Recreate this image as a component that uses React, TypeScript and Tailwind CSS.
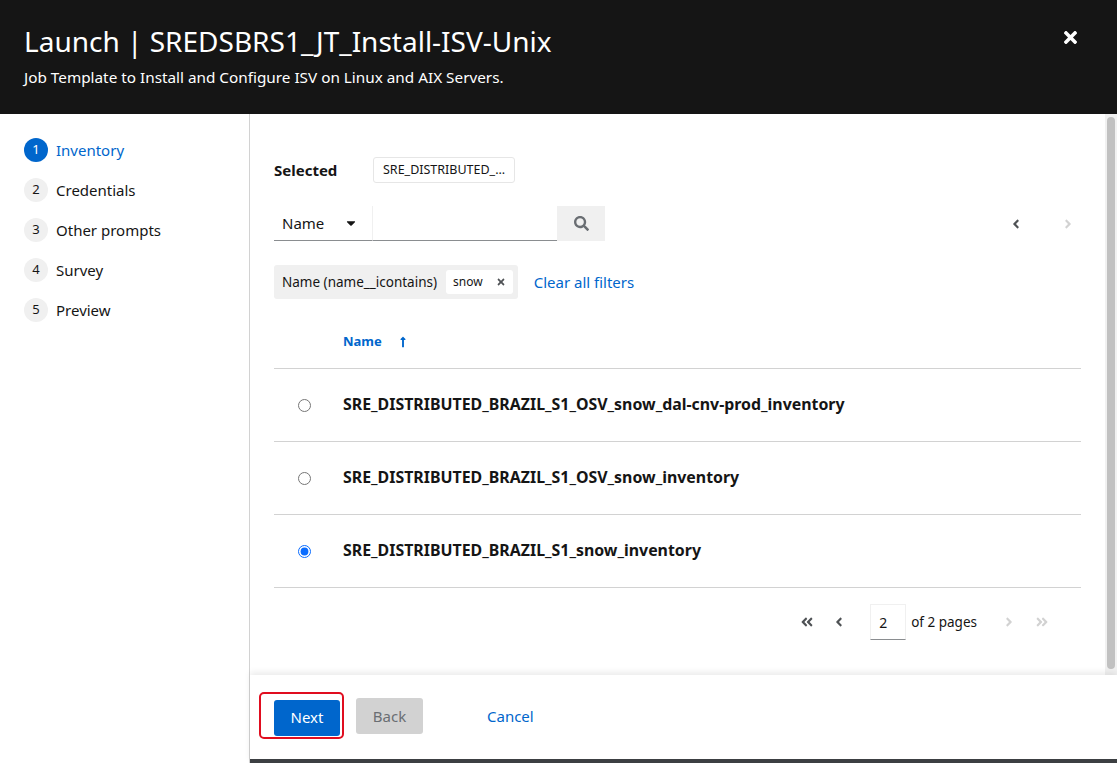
import React from "react";
import {
  FaSearch,
  FaAngleLeft,
  FaAngleRight,
  FaAngleDoubleLeft,
  FaAngleDoubleRight,
  FaTimes,
  FaCaretDown,
  FaLongArrowAltUp,
} from "react-icons/fa";

const steps = ["Inventory", "Credentials", "Other prompts", "Survey", "Preview"];

const rows = [
  { name: "SRE_DISTRIBUTED_BRAZIL_S1_OSV_snow_dal-cnv-prod_inventory", checked: false },
  { name: "SRE_DISTRIBUTED_BRAZIL_S1_OSV_snow_inventory", checked: false },
  { name: "SRE_DISTRIBUTED_BRAZIL_S1_snow_inventory", checked: true },
];

const App = () => {
  return (
    <div
      className="flex flex-col h-screen bg-white text-[#151515]"
      style={{ fontFamily: '"Noto Sans", "Open Sans", sans-serif' }}
    >
      <div className="h-[114px] bg-[#151515] text-white flex justify-between pl-6 pt-[22px]">
        <div>
          <div className="text-[28px] leading-[38px]">Launch | SREDSBRS1_JT_Install-ISV-Unix</div>
          <div className="text-[15.3px] mt-[6px]">Job Template to Install and Configure ISV on Linux and AIX Servers.</div>
        </div>
        <div className="pt-[6px] pr-[37px]">
          <FaTimes className="text-[19px]" />
        </div>
      </div>

      <div className="flex flex-1 min-h-0">
        <div className="w-[250px] border-r border-[#d2d2d2] pt-6 pl-6 flex flex-col gap-4">
          {steps.map((s, i) => (
            <div key={s} className="flex items-center h-6 gap-2">
              <div
                className={
                  i === 0
                    ? "w-6 h-6 rounded-full bg-[#0066cc] text-white text-[13px] flex items-center justify-center"
                    : "w-6 h-6 rounded-full bg-[#f0f0f0] text-[#151515] text-[13px] flex items-center justify-center"
                }
              >
                {i + 1}
              </div>
              <div className={i === 0 ? "text-[15px] text-[#0066cc]" : "text-[15px]"}>{s}</div>
            </div>
          ))}
        </div>

        <div className="flex-1 flex flex-col min-w-0">
          <div className="flex-1 flex min-h-0">
            <div className="flex-1 pl-6 pr-6 pt-[44px]">
              <div className="flex items-center h-[26px] -mt-[1px]">
                <div className="w-[99px] font-bold text-[15px]">Selected</div>
                <div className="border border-[#e6e6e6] rounded-[3px] px-[9px] h-[26px] flex items-center text-[12.5px]">
                  SRE_DISTRIBUTED_...
                </div>
              </div>

              <div className="flex items-center justify-between mt-[23px]">
                <div className="flex h-[35px]">
                  <div className="w-[98px] border-b border-[#8a8d90] flex items-center justify-between px-2 text-[15px]">
                    <span>Name</span>
                    <FaCaretDown className="text-[14px] mr-[6px]" />
                  </div>
                  <div className="w-[185px] border-l border-[#f0f0f0] border-b border-b-[#8a8d90]"></div>
                  <div className="w-[48px] bg-[#f0f0f0] flex items-center justify-center text-[#6a6e73]">
                    <FaSearch className="text-[15px]" />
                  </div>
                </div>
                <div className="flex items-center gap-[38px] pr-[6px] text-[14px]">
                  <FaAngleLeft className="text-[#4f5255]" />
                  <FaAngleRight className="text-[#d2d2d2]" />
                </div>
              </div>

              <div className="flex items-center mt-[24px]">
                <div className="bg-[#f0f0f0] rounded-[3px] h-[34px] flex items-center pl-2 pr-[5px] gap-[9px]">
                  <span className="text-[13.5px]">Name (name__icontains)</span>
                  <div className="bg-white rounded-[3px] h-6 px-[7px] flex items-center gap-[13px] text-[12px]">
                    <span>snow</span>
                    <FaTimes className="text-[10px] text-[#4f5255]" />
                  </div>
                </div>
                <div className="ml-[16px] text-[#0066cc] text-[15px]">Clear all filters</div>
              </div>

              <div className="mt-[23px] h-[47px] flex items-center border-b border-[#d2d2d2] pl-[69px] pb-[6px]">
                <span className="text-[#0066cc] text-[13px] font-bold">Name</span>
                <FaLongArrowAltUp className="text-[#0066cc] text-[12px] ml-[15px]" />
              </div>

              {rows.map((r) => (
                <div key={r.name} className="h-[73px] flex items-center border-b border-[#d2d2d2]">
                  <div className="w-[69px] flex">
                    <input
                      type="radio"
                      readOnly
                      checked={r.checked}
                      className="w-[13px] h-[13px] ml-[24px] accent-[#0a6cff]"
                    />
                  </div>
                  <span className="font-bold text-[15.9px]">{r.name}</span>
                </div>
              ))}

              <div className="flex items-center justify-end mt-[16px] pr-[32px] text-[14px]">
                <FaAngleDoubleLeft className="text-[#4f5255]" />
                <FaAngleLeft className="text-[#4f5255] ml-[18px]" />
                <div className="ml-[24px] w-[36px] h-[36px] border border-[#f0f0f0] border-b-[#8a8d90] flex items-center pl-2 text-[14px]">
                  2
                </div>
                <span className="ml-[5px] text-[13.5px]">of 2 pages</span>
                <FaAngleRight className="text-[#d2d2d2] ml-[25px]" />
                <FaAngleDoubleRight className="text-[#d2d2d2] ml-[19px]" />
              </div>
            </div>
            <div className="w-[12px] bg-[#f1f1f1] flex justify-center pt-[3px] pb-[6px]">
              <div className="w-[8px] h-full bg-[#c1c1c1] rounded-full"></div>
            </div>
          </div>

          <div className="h-[88px] border-b-4 border-[#3c3f42] shadow-[0_-3px_6px_rgba(0,0,0,0.08)] flex items-center pl-[9px] pb-[2px]">
            <div className="border-2 border-[#e00d1f] rounded-[5px] pt-[6px] pl-[13px] pr-[2px] pb-[1px] -mt-[2px]">
              <div className="bg-[#0066cc] text-white rounded-[3px] w-[66px] h-[36px] flex items-center justify-center text-[15px]">
                Next
              </div>
            </div>
            <div className="ml-[12px] bg-[#d2d2d2] text-[#6a6e73] rounded-[3px] w-[67px] h-[36px] flex items-center justify-center text-[15px]">
              Back
            </div>
            <div className="text-[#0066cc] text-[15px] ml-[64px]">Cancel</div>
          </div>
        </div>
      </div>
    </div>
  );
};

export default App;
